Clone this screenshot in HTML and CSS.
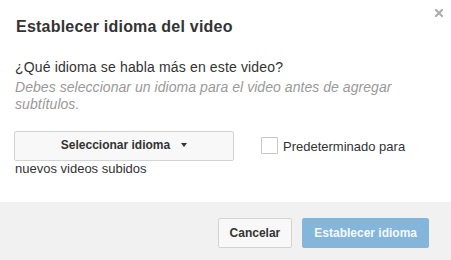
FILE: index.html
```html
<!DOCTYPE html>
<html lang="es">
<head>
<meta charset="utf-8">
<link rel="stylesheet" href="styles.css">
</head>
<body>
<div class="dialog">
  <button class="close" aria-label="Cerrar">
    <svg width="8" height="8" viewBox="0 0 8 8"><path d="M1 1 L7 7 M7 1 L1 7" stroke="#adadad" stroke-width="2.2" stroke-linecap="square"/></svg>
  </button>
  <div class="header">
    <h2 class="title">Establecer idioma del video</h2>
  </div>
  <div class="content">
    <p class="question">¿Qué idioma se habla más en este video?</p>
    <p class="hint">Debes seleccionar un idioma para el video antes de agregar subtítulos.</p>
    <div class="options">
      <button class="select"><span class="select-label">Seleccionar idioma</span><span class="caret"></span></button><span class="check"><span class="box"></span><span>Predeterminado para</span> <span>nuevos videos subidos</span></span>
    </div>
  </div>
  <div class="footer">
    <button class="btn">Cancelar</button>
    <button class="btn primary">Establecer idioma</button>
  </div>
</div>
</body>
</html>
```

FILE: styles.css
```css
html, body {
  margin: 0;
  padding: 0;
  background: #fff;
}
body {
  font-family: "Liberation Sans", Arial, sans-serif;
  color: #333;
}
.dialog {
  position: relative;
  width: 451px;
  height: 260px;
  overflow: hidden;
  background: #fff;
}
.close {
  position: absolute;
  top: 9px;
  right: 8px;
  width: 8px;
  height: 8px;
  padding: 0;
  border: 0;
  background: none;
  display: block;
}
.close svg { display: block; }
.header {
  padding: 17px 15px 0 16px;
}
.title {
  margin: 0;
  font-size: 16px;
  line-height: 20px;
  font-weight: bold;
  letter-spacing: 0.22px;
  color: #333;
}
.content {
  padding: 21px 15px 0 15px;
}
.question {
  margin: 0;
  font-size: 14px;
  line-height: 18px;
  letter-spacing: 0.15px;
}
.hint {
  margin: 3px 0 0 0;
  font-size: 14px;
  line-height: 17px;
  font-style: italic;
  letter-spacing: 0.05px;
  color: #999;
}
.options {
  margin-top: 18px;
  font-size: 13px;
  line-height: 16px;
  width: 421px;
}
.select {
  display: inline-flex;
  align-items: center;
  justify-content: center;
  box-sizing: border-box;
  width: 220px;
  height: 30px;
  margin-left: -1px;
  padding: 0 0 3px 0;
  border: 1px solid #d3d3d3;
  border-radius: 2px;
  background: #f8f8f8;
  font-family: inherit;
  font-size: 12px;
  font-weight: bold;
  color: #333;
  vertical-align: 2px;
}
.caret {
  display: inline-block;
  margin-left: 11px;
  margin-top: 1px;
  width: 0;
  height: 0;
  border-left: 3.5px solid transparent;
  border-right: 3.5px solid transparent;
  border-top: 4px solid #333;
}
.check {
  padding-left: 27px;
}
.box {
  display: inline-block;
  box-sizing: border-box;
  width: 17px;
  height: 17px;
  margin-right: 5px;
  border: 1px solid #c6c6c6;
  border-radius: 1px;
  background: #fff;
  vertical-align: -3px;
}
.footer {
  position: absolute;
  left: 0;
  right: 0;
  top: 202px;
  bottom: 0;
  background: #f1f1f1;
  display: flex;
  justify-content: flex-end;
  align-items: flex-start;
  gap: 10px;
  padding: 16px 22px 0 0;
}
.btn {
  box-sizing: border-box;
  height: 30px;
  padding: 0 11px;
  border: 1px solid #d3d3d3;
  border-radius: 2px;
  background: #f8f8f8;
  font-family: inherit;
  font-size: 12px;
  font-weight: bold;
  color: #333;
}
.primary {
  background: #84b5db;
  border-color: #84b5db;
  color: #f6f9fc;
}
```
